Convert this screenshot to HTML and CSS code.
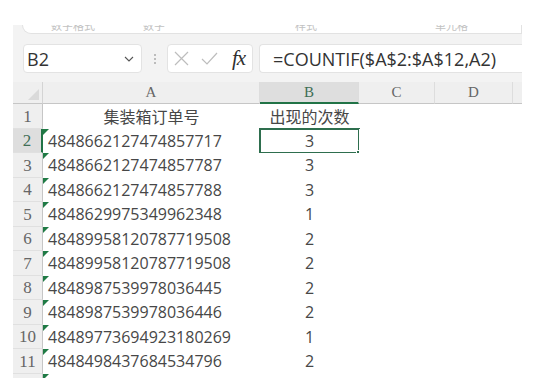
FILE: index.html
```html
<!DOCTYPE html>
<html lang="zh-CN">
<head>
    <meta charset="UTF-8">
    <meta name="viewport" content="width=device-width, initial-scale=1.0">
    <title>集装箱订单号 - 出现的次数</title>
    <link rel="stylesheet" href="styles.css">
</head>
<body>

<div class="sheet-window">
    <div class="ribbon">
        <span class="rb-label rb-1">数字格式</span>
        <span class="rb-label rb-2">数字</span>
        <span class="rb-label rb-3">样式</span>
        <span class="rb-label rb-4">单元格</span>
    </div>

    <div class="formula-bar">
        <div class="name-box">
            <span>B2</span>
            <svg class="chevron" width="10" height="6" viewBox="0 0 10 6"><path d="M1 1 L5 5 L9 1" fill="none" stroke="#555" stroke-width="1.1"/></svg>
        </div>
        <div class="grip"><i></i><i></i><i></i></div>
        <div class="fx-box">
            <svg class="fx-icon" width="15" height="15" viewBox="0 0 15 15"><path d="M1 1 L14 14 M14 1 L1 14" stroke="#bdbdbd" stroke-width="1.2"/></svg>
            <svg class="fx-icon" width="17" height="13" viewBox="0 0 17 13"><path d="M1 7 L6 12 L16 1" fill="none" stroke="#bdbdbd" stroke-width="1.2"/></svg>
            <span class="fx-label">fx</span>
        </div>
        <div class="formula-input">=COUNTIF($A$2:$A$12,A2)</div>
    </div>

    <div class="grid" id="grid">
        <!-- rows are inserted by the script below -->
    </div>
</div>

<script>
    const orders = [
        ["4848662127474857717", 3],
        ["4848662127474857787", 3],
        ["4848662127474857788", 3],
        ["4848629975349962348", 1],
        ["48489958120787719508", 2],
        ["48489958120787719508", 2],
        ["4848987539978036445", 2],
        ["4848987539978036446", 2],
        ["48489773694923180269", 1],
        ["4848498437684534796", 2]
    ];

    function renderGrid() {
        const grid = document.getElementById("grid");
        let html = `
            <div class="corner"></div>
            <div class="col-head">A</div>
            <div class="col-head active">B</div>
            <div class="col-head">C</div>
            <div class="col-head">D</div>
            <div class="col-head last"></div>

            <div class="row-head">1</div>
            <div class="cell center">集装箱订单号</div>
            <div class="cell center">出现的次数</div>
            <div class="cell"></div><div class="cell"></div><div class="cell"></div>
        `;

        orders.forEach((row, i) => {
            const n = i + 2;
            html += `
                <div class="row-head${n === 2 ? " active" : ""}">${n}</div>
                <div class="cell flag">${row[0]}</div>
                <div class="cell center${n === 2 ? " selected" : ""}">${row[1]}</div>
                <div class="cell"></div><div class="cell"></div><div class="cell"></div>
            `;
        });

        // partly visible row 12 at the bottom edge
        html += `
            <div class="row-head"></div>
            <div class="cell flag"></div>
            <div class="cell"></div><div class="cell"></div><div class="cell"></div><div class="cell"></div>
        `;
        grid.innerHTML = html;
    }

    renderGrid();
</script>

</body>
</html>
```

FILE: styles.css
```css
body {
    margin: 0;
    background-color: #ffffff;
    font-family: "Open Sans", "Noto Sans CJK SC", sans-serif;
    overflow: hidden;
}
.sheet-window {
    margin: 25px 0 0 13px;
    width: 509px;
    height: 353px;
    background-color: #f3f3f3;
    overflow: hidden;
}
.ribbon {
    margin-left: 9px;
    height: 8px;
    background-color: #ffffff;
    border: 1px solid #e2e2e2;
    border-top: none;
    border-radius: 0 0 0 9px;
    overflow: hidden;
    display: flex;
    font-size: 11px;
    line-height: 11px;
    color: #c2c2c2;
}
.rb-label {
    margin-top: -5px;
}
.rb-1 { margin-left: 28px; }
.rb-2 { margin-left: 48px; }
.rb-3 { margin-left: 130px; }
.rb-4 { margin-left: 118px; }

.formula-bar {
    display: flex;
    align-items: center;
    margin-top: 10px;
    margin-left: 10px;
    height: 29px;
}
.name-box, .fx-box, .formula-input {
    height: 29px;
    box-sizing: border-box;
    background-color: #ffffff;
    border: 1px solid #e3e3e3;
    border-radius: 4px;
    display: flex;
    align-items: center;
}
.name-box {
    width: 119px;
    padding-left: 3px;
    font-size: 18px;
    color: #333;
    justify-content: space-between;
}
.chevron {
    margin-right: 7px;
}
.grip {
    width: 25px;
    display: flex;
    flex-direction: column;
    align-items: center;
    gap: 2px;
}
.grip i {
    width: 2px;
    height: 2px;
    background-color: #aaa;
    border-radius: 1px;
}
.fx-box {
    width: 86px;
    padding-left: 6px;
    gap: 12px;
}
.fx-label {
    font-family: "Liberation Serif", serif;
    font-style: italic;
    font-size: 21px;
    color: #2f2f2f;
    margin-left: 2px;
    letter-spacing: -1px;
}
.formula-input {
    flex: 1;
    margin-left: 6px;
    padding-left: 13px;
    font-size: 18px;
    color: #333;
    border-right: none;
    border-radius: 4px 0 0 4px;
}

.grid {
    display: grid;
    grid-template-columns: 30px 217px 99px 76px 78px 9px;
    grid-template-rows: 22px;
    grid-auto-rows: 24.5px;
    margin-top: 9px;
}
.corner, .col-head, .row-head {
    background-color: #efefef;
    box-sizing: border-box;
    font-family: "Liberation Serif", serif;
    color: #666;
    display: flex;
    align-items: center;
    justify-content: center;
}
.corner {
    position: relative;
    border-right: 1px solid #d4d4d4;
    border-bottom: 1px solid #c6c6c6;
}
.corner::after {
    content: "";
    position: absolute;
    right: 3px;
    bottom: 3px;
    border-left: 11px solid transparent;
    border-bottom: 11px solid #dadada;
}
.col-head {
    font-size: 15px;
    border-right: 1px solid #dddddd;
    border-bottom: 1px solid #c6c6c6;
}
.col-head.active {
    background-color: #dedede;
    color: #3f6e55;
    border-bottom: 2px solid #217346;
}
.col-head.last {
    border-right: none;
}
.row-head {
    font-size: 17px;
    border-right: 1px solid #c6c6c6;
    border-bottom: 1px solid #e0e0e0;
    padding-top: 2px;
}
.row-head.active {
    background-color: #dedede;
    color: #3f6e55;
    border-right: 2px solid #217346;
}
.cell {
    position: relative;
    background-color: #ffffff;
    font-size: 16px;
    color: #474747;
    display: flex;
    align-items: center;
    padding-left: 5px;
    white-space: nowrap;
}
.cell.center {
    justify-content: center;
    padding-left: 0;
}
.cell.flag::before {
    content: "";
    position: absolute;
    left: 0;
    top: 0;
    border-top: 6px solid #1f7a45;
    border-right: 6px solid transparent;
}
.cell.selected {
    outline: 2px solid #2e6e4e;
    outline-offset: -1px;
}
.cell.selected::after {
    content: "";
    position: absolute;
    right: -4px;
    bottom: -4px;
    width: 5px;
    height: 5px;
    background-color: #2e6e4e;
    border: 1px solid #ffffff;
}
```
